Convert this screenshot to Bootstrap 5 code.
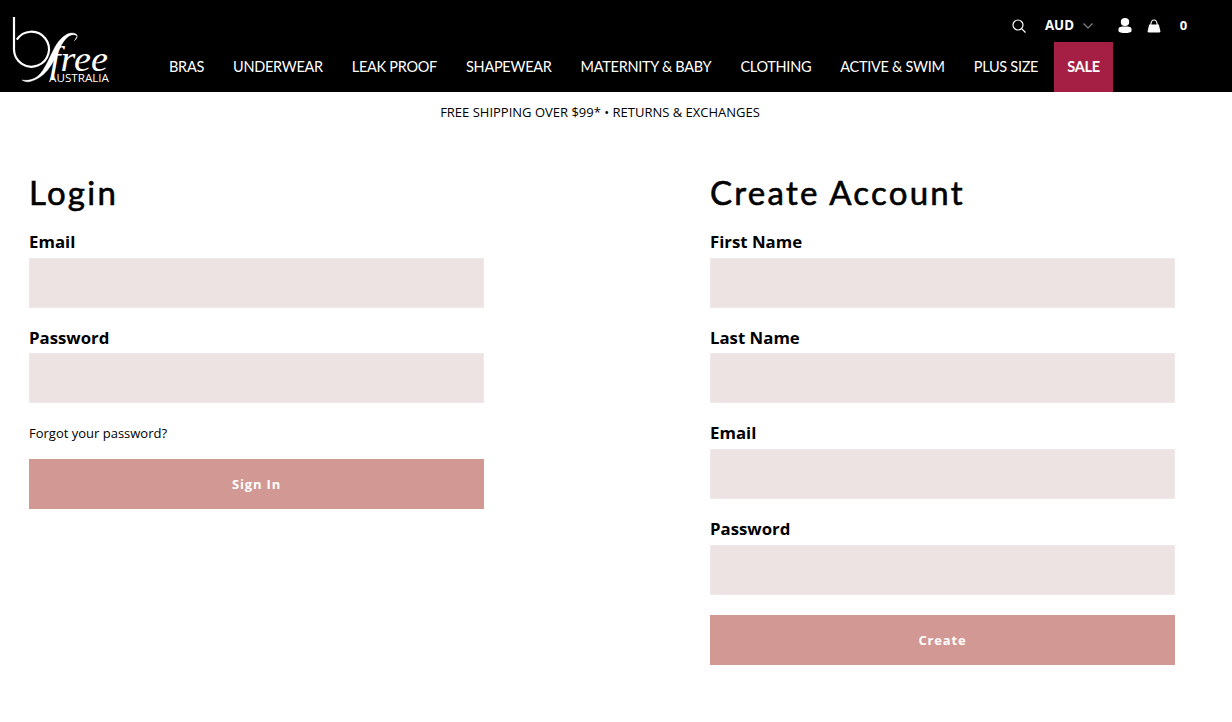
<!DOCTYPE html>
<html lang="en"><head><meta charset="utf-8"><title>Account</title>
<link href="https://cdn.jsdelivr.net/npm/bootstrap@5.3.0/dist/css/bootstrap.min.css" rel="stylesheet">
<style>
html,body{height:722px;overflow:hidden}
body{background:#fff;color:#000;font-family:"Open Sans",sans-serif}
.site-head{background:#000;height:92px;position:relative}
.brand-logo{width:100px;height:88px;margin-left:10px;margin-top:4px;flex:none}
.head-main{flex:1 1 auto;min-width:0;height:92px}
.util-row{height:42px;padding-right:41px;padding-top:9px;color:#fff;font-size:13px;font-weight:700}
.search-ic{margin-right:2px}
.cur{margin-left:17px;margin-right:25px;gap:9px;font-size:13.3px}
.cart-n{margin-left:15px;width:15px}
.bag{margin-left:15px}
.main-nav{height:50px;padding-left:46px;gap:3px;font-family:Lato,sans-serif;font-size:14.5px;letter-spacing:-.285px}
.main-nav a{color:#fff;text-decoration:none;padding:0 13px;height:50px;line-height:50px;display:block}
.main-nav a.sale{background:#a51e43;font-weight:700}
.promo{font-size:13px;text-align:center;height:41px;line-height:41px;padding-right:32px}
.form-wrap{padding-top:38px}
.login-col{width:455px;margin-left:29px}
.create-col{width:465px;margin-left:226px}
.pg-title{font-family:Lato,sans-serif;font-weight:400;font-size:33px;letter-spacing:2.25px;line-height:42px;margin:0 0 17.6px;-webkit-text-stroke:.6px #000}
.fld-label{font-weight:700;font-size:16.8px;line-height:20px;padding-top:1.4px;margin:0 0 5.6px;display:block}
.fld-input{background:#ede3e3;border:1px solid #efe8e8;border-radius:0;height:50px;display:block;width:100%;margin-bottom:18.67px}
.forgot{font-size:13px;color:#000;text-decoration:none;display:block;line-height:18px;margin:21px 0 16.7px}
.act-btn{background:#d29893;border:0;border-radius:0;color:#fff;font-weight:700;font-size:13px;letter-spacing:.85px;height:50px;width:100%;display:block;padding:2px 0 0}
.create-col .fld-input:last-of-type{margin-bottom:20.4px}
</style></head><body>
<header class="site-head d-flex">
<a class="brand-logo d-block" href="#" aria-label="bfree Australia">
<svg width="100" height="88" viewBox="10 4 100 88">
<path d="M14 17V50A17.500 17.500 0 1 0 16.800 39.700" fill="none" stroke="#fff" stroke-width="2.200"/>
<path d="M77 36C72 32 65 37 60 48C54 60 48 77 30 81.500C27 82.200 24 81.500 22 80C27 81 33 80 38 76C45 70 49 58 55 47C60 38 68 31 75 33.500C79 35 77 39 74 41" fill="#fff" stroke="#fff" stroke-width=".4"/>
<text x="50" y="71" fill="#fff" font-family="Liberation Serif" font-style="italic" font-size="36" textLength="58" lengthAdjust="spacingAndGlyphs">free</text>
<text x="49" y="82" fill="#fff" font-family="Open Sans" font-size="10" textLength="60" lengthAdjust="spacingAndGlyphs">AUSTRALIA</text>
</svg></a>
<div class="head-main d-flex flex-column">
<div class="util-row d-flex justify-content-end align-items-center">
<svg class="search-ic" width="14" height="14" viewBox="0 0 14 14" fill="none" stroke="#fff" stroke-width="1.200"><circle cx="6" cy="6" r="5"/><path d="M9.600 9.600L13.500 13.500"/></svg>
<span class="cur d-flex align-items-center">AUD<svg width="10" height="6" viewBox="0 0 10 6" fill="none" stroke="#8a8a8a" stroke-width="1.100"><path d="M.5.500L5 5L9.500.500"/></svg></span>
<svg width="14" height="15" viewBox="0 0 14 15" fill="#fff"><ellipse cx="7" cy="4" rx="4.200" ry="4"/><path d="M.5 13V11C.5 9 3 8.500 7 8.500s6.500.5 6.500 2.500v2C13.500 14.500 10 15 7 15S.5 14.500.5 13z"/></svg>
<svg class="bag" width="14" height="14" viewBox="0 0 14 14"><path d="M1.500 13.500L.5 12.500L2.200 5.500H11.800L13.500 12.500L12.500 13.500z" fill="#fff"/><path d="M3.800 6C4 2 5 1 7 1s3 1 3.200 5" fill="none" stroke="#fff" stroke-width="1.100"/></svg>
<span class="cart-n text-center">0</span>
</div>
<nav class="main-nav d-flex">
<a href="#">BRAS</a><a href="#">UNDERWEAR</a><a href="#">LEAK PROOF</a><a href="#">SHAPEWEAR</a><a href="#">MATERNITY &amp; BABY</a><a href="#">CLOTHING</a><a href="#">ACTIVE &amp; SWIM</a><a href="#">PLUS SIZE</a><a href="#" class="sale">SALE</a>
</nav>
</div>
</header>
<div class="promo">FREE SHIPPING OVER $99* • RETURNS &amp; EXCHANGES</div>
<main class="form-wrap d-flex align-items-start">
<form class="login-col">
<h1 class="pg-title">Login</h1>
<label class="fld-label" for="le">Email</label><input class="fld-input" id="le" type="email">
<label class="fld-label" for="lp">Password</label><input class="fld-input" id="lp" type="password">
<a class="forgot" href="#">Forgot your password?</a>
<button class="act-btn" type="button">Sign In</button>
</form>
<form class="create-col">
<h1 class="pg-title">Create Account</h1>
<label class="fld-label" for="cf">First Name</label><input class="fld-input" id="cf" type="text">
<label class="fld-label" for="cl">Last Name</label><input class="fld-input" id="cl" type="text">
<label class="fld-label" for="ce">Email</label><input class="fld-input" id="ce" type="email">
<label class="fld-label" for="cp">Password</label><input class="fld-input" id="cp" type="password">
<button class="act-btn" type="button">Create</button>
</form>
</main>
</body></html>
